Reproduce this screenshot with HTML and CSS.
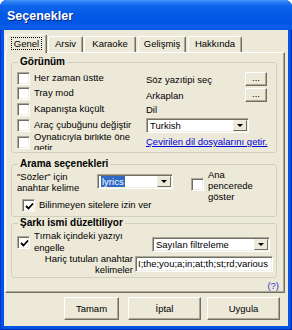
FILE: index.html
```html
<!DOCTYPE html>
<html lang="tr">
<head>
    <meta charset="UTF-8">
    <title>Seçenekler</title>
    <link rel="stylesheet" href="styles.css">
</head>
<body>

<div class="window">
    <div class="titlebar"><span class="title">Seçenekler</span></div>

    <div class="client">
        <!-- Tab strip -->
        <div class="tabs">
            <div class="tab tab-active tab-genel"><span class="focus">Genel</span></div>
            <div class="tab tab-arsiv">Arsiv</div>
            <div class="tab tab-karaoke">Karaoke</div>
            <div class="tab tab-gelismis">Gelişmiş</div>
            <div class="tab tab-hakkinda">Hakkında</div>
        </div>

        <div class="panel">
            <!-- Görünüm -->
            <fieldset class="group">
                <legend>Görünüm</legend>
                <div class="view-cols">
                    <div class="col-left">
                        <div class="check-row"><span class="checkbox"></span><span class="check-text">Her zaman üstte</span></div>
                        <div class="check-row"><span class="checkbox"></span><span class="check-text">Tray mod</span></div>
                        <div class="check-row"><span class="checkbox"></span><span class="check-text">Kapanışta küçült</span></div>
                        <div class="check-row"><span class="checkbox"></span><span class="check-text">Araç çubuğunu değiştir</span></div>
                        <div class="check-row check-clipped"><span class="checkbox"></span><span class="check-text two-line">Oynatıcıyla birlikte öne<br>getir</span></div>
                    </div>
                    <div class="col-right">
                        <div class="pick-row"><span>Söz yazıtipi seç</span><span class="button dots">...</span></div>
                        <div class="pick-row pick-second"><span>Arkaplan</span><span class="button dots">...</span></div>
                        <div class="lang-label">Dil</div>
                        <div class="field combo combo-lang"><span class="combo-value">Turkish</span><span class="combo-btn"><span class="arrow"></span></span></div>
                        <a class="link" href="#">Çevirilen dil dosyalarını getir.</a>
                    </div>
                </div>
            </fieldset>

            <!-- Arama seçenekleri -->
            <fieldset class="group group-search">
                <legend>Arama seçenekleri</legend>
                <div class="search-top">
                    <div class="search-label">"Sözler" için<br>anahtar kelime</div>
                    <div class="field combo combo-lyrics"><span class="combo-value"><span class="selected">lyrics</span></span><span class="combo-btn"><span class="arrow"></span></span></div>
                    <span class="checkbox check-ana"></span>
                    <div class="ana-text">Ana<br>pencerede<br>göster</div>
                </div>
                <div class="check-row check-unknown"><span class="checkbox checked"><svg width="9" height="9" viewBox="0 0 9 9"><polyline points="1,4 3.5,6.5 8,1.5" fill="none" stroke="#000" stroke-width="1.8"/></svg></span><span class="check-text unknown-text">Bilinmeyen sitelere izin ver</span></div>
            </fieldset>

            <!-- Şarkı ismi düzeltiliyor -->
            <fieldset class="group group-song">
                <legend>Şarkı ismi düzeltiliyor</legend>
                <div class="song-row">
                    <span class="checkbox checked check-quote"><svg width="9" height="9" viewBox="0 0 9 9"><polyline points="1,4 3.5,6.5 8,1.5" fill="none" stroke="#000" stroke-width="1.8"/></svg></span>
                    <div class="quote-text">Tırnak içindeki yazıyı<br>engelle</div>
                    <div class="field combo combo-filter"><span class="combo-value">Sayılan filtreleme</span><span class="combo-btn"><span class="arrow"></span></span></div>
                </div>
                <div class="song-row song-second">
                    <div class="exclude-label">Hariç tutulan anahtar<br>kelimeler</div>
                    <div class="field text-input">I;the;you;a;in;at;th;st;rd;various</div>
                </div>
            </fieldset>

            <div class="help">(?)</div>
        </div>

        <div class="buttons">
            <span class="button push btn-ok">Tamam</span>
            <span class="button push btn-cancel">İptal</span>
            <span class="button push btn-apply">Uygula</span>
        </div>
    </div>
</div>

</body>
</html>
```

FILE: styles.css
```css
body {
    margin: 0;
    background: #fff;
    font-family: "Liberation Sans", Arial, sans-serif;
    font-size: 9.5px;
    color: #000;
}

/* XP window frame */
.window {
    width: 292px;
    height: 330px;
    background: #0055e5;
    border-radius: 7px 7px 0 0;
    box-shadow: inset 1px 0 0 #0831d9, inset -1px -1px 0 #0026b0;
    overflow: hidden;
}

.titlebar {
    height: 30px;
    box-sizing: border-box;
    padding: 2px 0 0 7px;
    border-radius: 7px 7px 0 0;
    background: linear-gradient(#4a97f7 0, #2a80f6 2px, #0e65ec 6px, #0459e6 14px, #0254e3 23px, #0a5fea 27px, #0656e2 30px);
}
.title {
    color: #fff;
    font-size: 12.5px;
    font-weight: bold;
    line-height: 28px;
    text-shadow: 1px 1px 0 #0b2a84;
}

.client {
    margin: 0 4px;
    height: 296px;
    box-sizing: border-box;
    padding: 4px 0 0 1px;
    background: #ece9d8;
}

/* Tabs */
.tabs {
    display: flex;
    align-items: flex-end;
    height: 18px;
    padding-left: 1px;
}
.tab {
    height: 16px;
    box-sizing: border-box;
    border: 1px solid #fff;
    border-right-color: #716f64;
    border-bottom: none;
    border-radius: 2px 2px 0 0;
    box-shadow: inset -1px 0 0 #aca899;
    text-align: center;
    line-height: 14px;
}
.tab-active {
    height: 19px;
    margin-bottom: -1px;
    padding-top: 2px;
    position: relative;
    z-index: 1;
    background: #ece9d8;
}
.focus {
    display: inline-block;
    height: 13px;
    box-sizing: border-box;
    padding: 0 2px;
    border: 1px dotted #000;
    line-height: 11px;
}
.tab-genel { width: 41px; }
.tab-arsiv { width: 35px; margin-left: 1px; }
.tab-karaoke { width: 52px; margin-left: 1px; }
.tab-gelismis { width: 48px; margin-left: 2px; }
.tab-hakkinda { width: 54px; margin-left: 2px; }

/* Tab page */
.panel {
    width: 280px;
    height: 241px;
    box-sizing: border-box;
    padding: 3px 0 0 5px;
    border: 1px solid #fff;
    border-right-color: #716f64;
    border-bottom-color: #716f64;
    box-shadow: inset -1px -1px 0 #aca899;
}

.group {
    width: 266px;
    box-sizing: border-box;
    min-width: 0;
    margin: 0;
    padding: 0 0 0 5px;
    border: 1px solid #d0d0bf;
    border-radius: 3px;
}
.group legend {
    margin-left: 1px;
    padding: 0 2px;
    font-size: 10px;
    font-weight: bold;
    line-height: 12px;
}
.group-search {
    margin-top: 5px;
    padding-bottom: 3px;
}

/* Checkboxes */
.checkbox {
    display: flex;
    align-items: center;
    justify-content: center;
    flex: none;
    width: 13px;
    height: 13px;
    box-sizing: border-box;
    border: 1px solid;
    border-color: #aca899 #fff #fff #aca899;
    box-shadow: inset 1px 1px 0 #716f64, inset -1px -1px 0 #f1efe2;
    background: #fff;
}
.checkbox svg {
    margin: 1px 0 0 1px;
}
.check-row {
    display: flex;
    height: 16px;
}
.check-row .checkbox {
    margin-top: 1px;
}
.check-text {
    margin-left: 4px;
    line-height: 14px;
    white-space: nowrap;
}

/* Görünüm */
.view-cols {
    display: flex;
    height: 84px;
}
.col-left {
    width: 129px;
    padding-top: 3px;
}
.col-left .check-row:first-child {
    height: 15px;
}
.check-clipped {
    overflow: hidden;
    align-items: center;
}
.check-clipped .checkbox {
    margin-top: 0;
}
.two-line {
    line-height: 11px;
}
.col-right {
    width: 121px;
    padding-top: 4px;
    display: flex;
    flex-direction: column;
}
.pick-row {
    display: flex;
    justify-content: space-between;
    align-items: center;
    height: 14px;
}
.pick-second {
    margin-top: 2px;
}
.lang-label {
    margin-top: 1px;
    height: 13px;
    line-height: 13px;
}
.link {
    margin-top: 2px;
    height: 14px;
    line-height: 14px;
    color: #0000dd;
    white-space: nowrap;
}

/* Buttons */
.button {
    box-sizing: border-box;
    border: 1px solid;
    border-color: #fff #716f64 #716f64 #fff;
    box-shadow: inset -1px -1px 0 #aca899;
    background: #ece9d8;
    text-align: center;
}
.dots {
    width: 22px;
    height: 14px;
    line-height: 10px;
}

/* Fields and combos */
.field {
    box-sizing: border-box;
    border: 1px solid;
    border-color: #aca899 #fff #fff #aca899;
    box-shadow: inset 1px 1px 0 #716f64, inset -1px -1px 0 #f1efe2;
    background: #fff;
}
.combo {
    display: flex;
    height: 15px;
}
.combo-value {
    flex: 1;
    padding-left: 3px;
    line-height: 13px;
    white-space: nowrap;
}
.combo-btn {
    display: flex;
    align-items: center;
    justify-content: center;
    width: 14px;
    margin: 1px;
    box-sizing: border-box;
    border: 1px solid;
    border-color: #f1efe2 #716f64 #716f64 #f1efe2;
    background: #ece9d8;
}
.arrow {
    width: 0;
    height: 0;
    border-left: 3px solid transparent;
    border-right: 3px solid transparent;
    border-top: 3px solid #000;
}
.combo-lang {
    margin-top: 2px;
    width: 103px;
}
.selected {
    background: #316ac5;
    color: #fff;
    padding: 0 1px;
}

/* Arama seçenekleri */
.search-top {
    display: flex;
    height: 28px;
}
.search-label {
    width: 80px;
    padding-top: 1px;
    line-height: 11px;
}
.combo-lyrics {
    margin-top: 4px;
    width: 76px;
}
.check-ana {
    margin: 8px 0 0 18px;
}
.ana-text {
    margin: -1px 0 0 4px;
    line-height: 11px;
}
.check-unknown {
    margin-left: 5px;
    height: 15px;
}

/* Şarkı ismi düzeltiliyor */
.song-row {
    display: flex;
    height: 23px;
}
.check-quote {
    margin-top: 7px;
}
.quote-text {
    width: 118px;
    margin-left: 4px;
    padding-top: 1px;
    line-height: 12px;
    white-space: nowrap;
}
.combo-filter {
    margin-top: 8px;
    width: 118px;
}
.song-second {
    height: 25px;
}
.exclude-label {
    width: 116px;
    padding-top: 1px;
    line-height: 11px;
    text-align: right;
}
.text-input {
    margin: 4px 0 0 2px;
    width: 138px;
    height: 16px;
    padding-left: 2px;
    line-height: 14px;
    white-space: nowrap;
    overflow: hidden;
}

.help {
    margin-top: 2px;
    padding-right: 5px;
    line-height: 12px;
    text-align: right;
    color: #2f2fd0;
}

/* Dialog buttons */
.buttons {
    display: flex;
    margin-top: 4px;
}
.push {
    height: 23px;
    line-height: 21px;
}
.btn-ok { width: 55px; margin-left: 59px; }
.btn-cancel { width: 73px; margin-left: 9px; }
.btn-apply { width: 73px; margin-left: 6px; }
```
